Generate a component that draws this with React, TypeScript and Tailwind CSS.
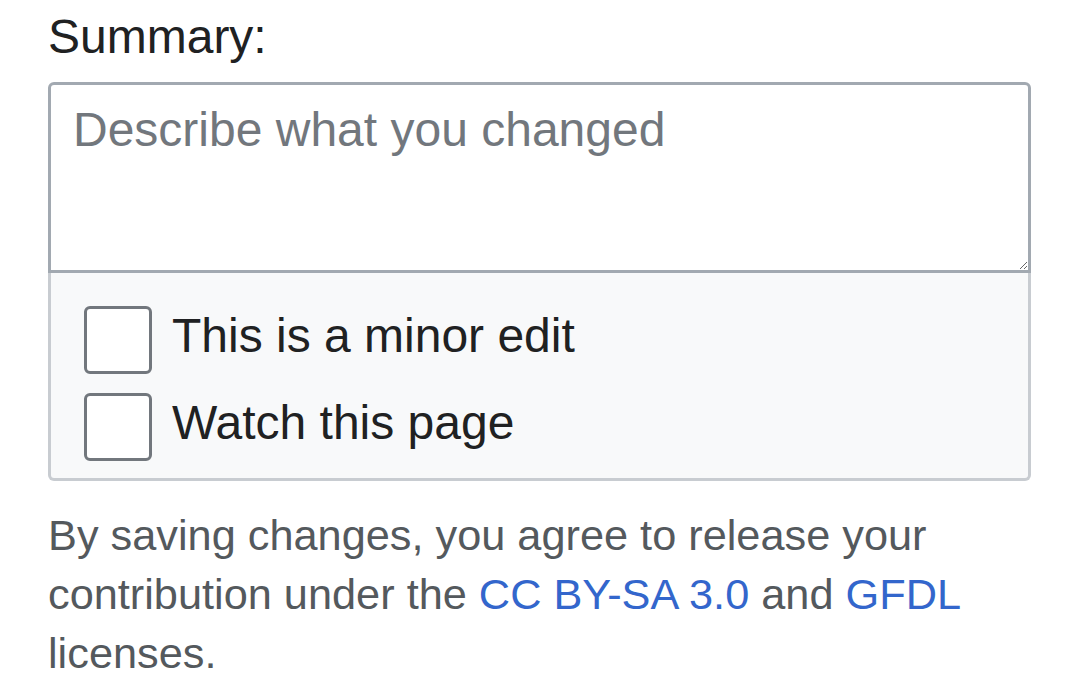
import React from 'react';

// Edit summary block, zoomed mobile view
const font = { fontFamily: '"Liberation Sans", Arial, Helvetica, sans-serif' };

const Checkbox: React.FC<{ label: string }> = ({ label }) => {
  return (
    <label className="flex items-start gap-[20px] cursor-pointer">
      <span className="block w-[68px] h-[68px] shrink-0 rounded-[6px] border-[3px] border-[#72777d] bg-white" />
      <span className="text-[48px] leading-[60px] text-[#202122]">{label}</span>
    </label>
  );
};

export default function App() {
  return (
    <div className="w-[1080px] h-[678px] overflow-hidden bg-white pl-[48px]" style={font}>
      <div className="w-[983px]">
        <div className="text-[48px] leading-[73px] text-[#202122] mb-[9px]">Summary:</div>

        <textarea
          className="block w-full h-[191px] rounded-t-[6px] border-[3px] border-[#a2a9b1] bg-white pt-[14px] pl-[22px] pr-[22px] text-[48px] leading-[62px] text-[#202122] placeholder:text-[#72777d] outline-none resize-y"
          style={font}
          placeholder="Describe what you changed"
        />

        <div className="flex flex-col gap-[19px] bg-[#f8f9fa] border-x-[3px] border-b-[3px] border-[#c8ccd1] rounded-b-[6px] pt-[33px] pb-[17px] pl-[33px]">
          <Checkbox label="This is a minor edit" />
          <Checkbox label="Watch this page" />
        </div>

        <p className="mt-[25px] text-[43.3px] leading-[59px] text-[#54595d]">
          By saving changes, you agree to release your contribution under the{' '}
          <a className="text-[#3366cc]" href="#">
            CC BY-SA 3.0
          </a>{' '}
          and{' '}
          <a className="text-[#3366cc]" href="#">
            GFDL
          </a>{' '}
          licenses.
        </p>
      </div>
    </div>
  );
}
